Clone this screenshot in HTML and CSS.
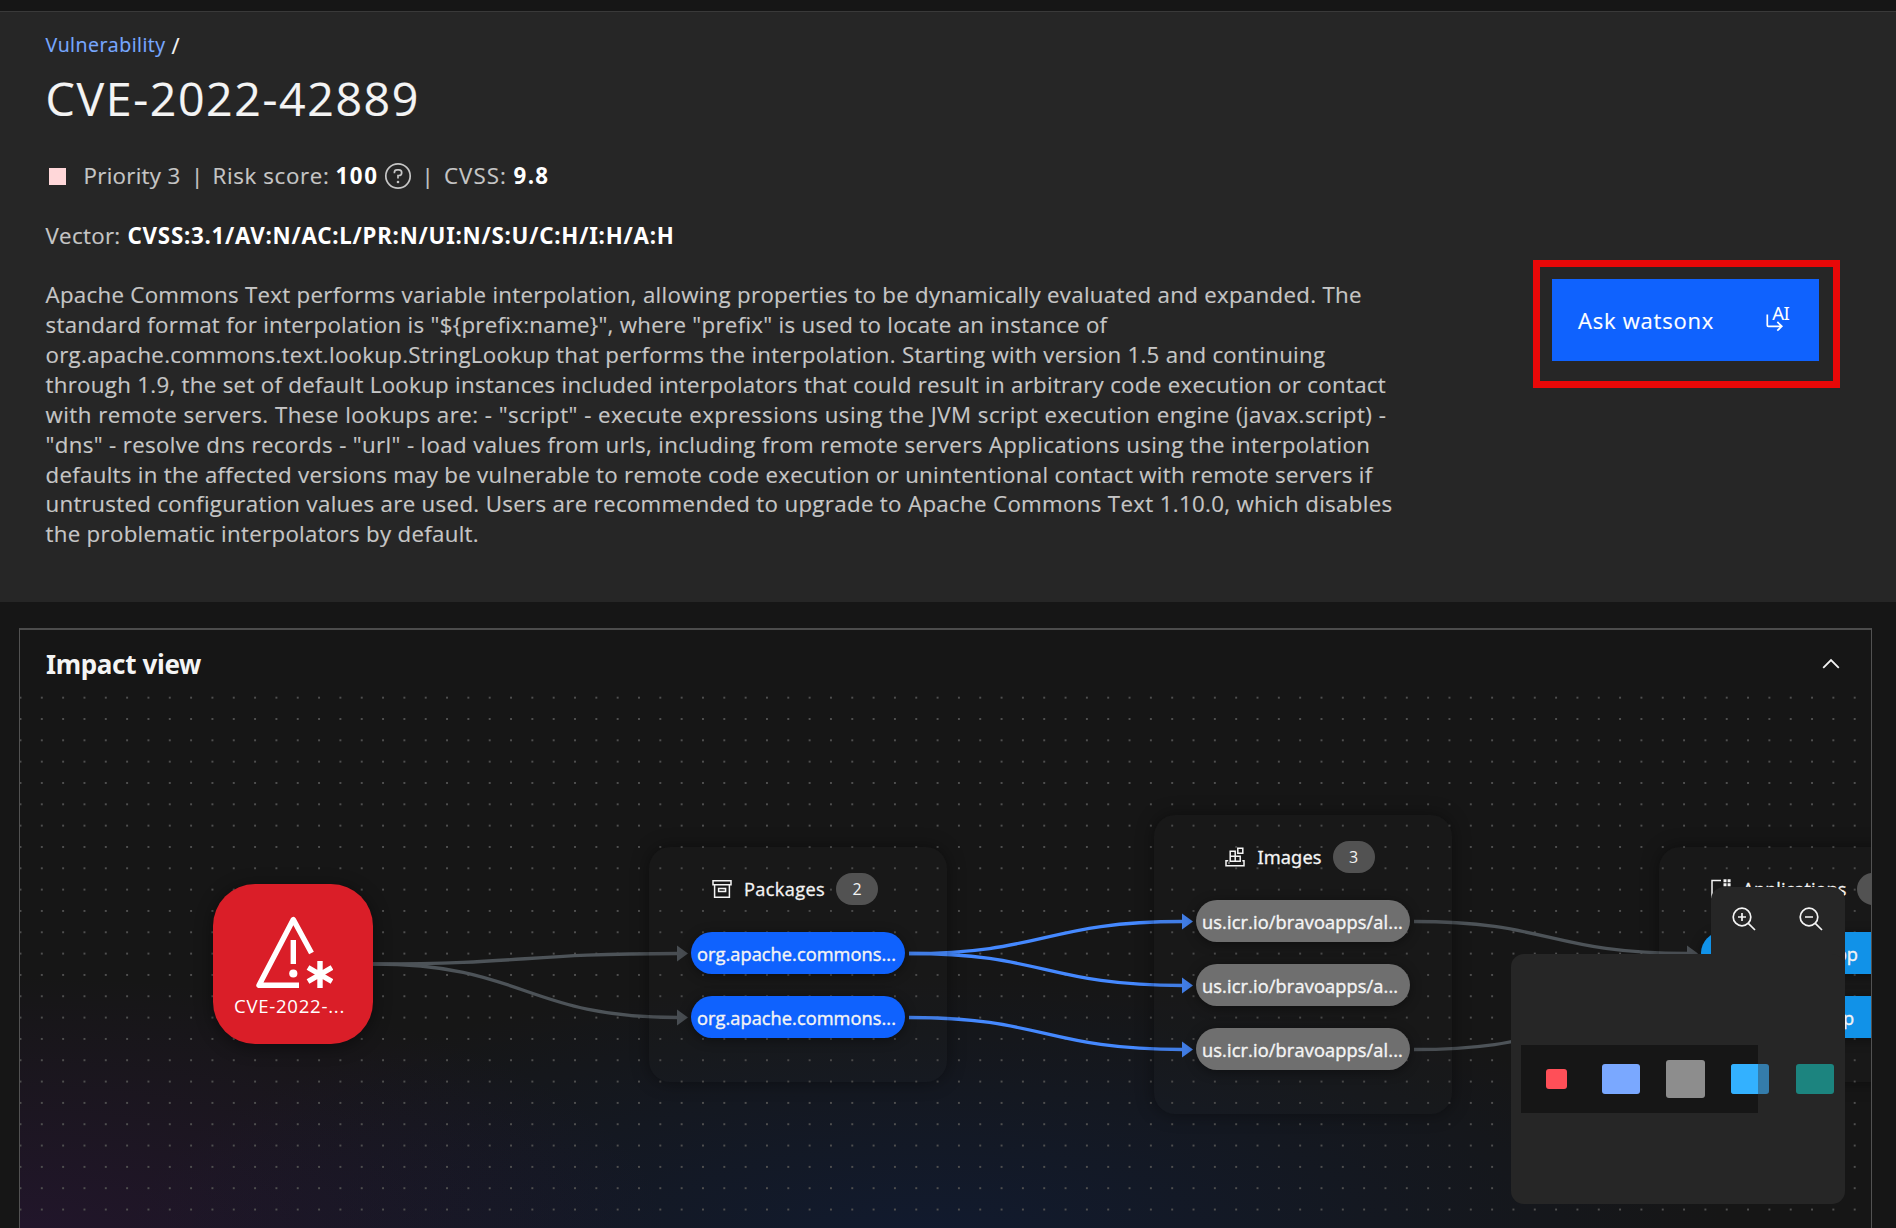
FILE: index.html
```html
<!DOCTYPE html>
<html lang="en">
<head>
<meta charset="utf-8">
<title>CVE-2022-42889</title>
<link rel="stylesheet" href="styles.css">
</head>
<body>
<header class="page-header">
  <div class="summary">
    <nav class="breadcrumb"><a class="crumb">Vulnerability</a><span class="slash">/</span></nav>
    <h1 class="title">CVE-2022-42889</h1>
    <div class="metrics">
      <span class="swatch"></span>
      <span class="priority">Priority 3</span>
      <span class="bar">|</span>
      <span class="risk">Risk score:</span>
      <strong class="risk-value">100</strong>
      <svg class="help" viewBox="0 0 28 28"><circle cx="14" cy="14" r="12.2"/><path d="M10.4 11.2v-.7a2.6 2.6 0 0 1 2.6-2.6h1.9a2.8 2.8 0 0 1 0 5.600H14v3"/><circle class="dot" cx="14" cy="20" r="1.3"/></svg>
      <span class="bar">|</span>
      <span class="cvss">CVSS:</span>
      <strong class="cvss-value">9.8</strong>
    </div>
    <div class="vector"><span class="vector-label">Vector:</span><strong class="vector-value">CVSS:3.1/AV:N/AC:L/PR:N/UI:N/S:U/C:H/I:H/A:H</strong></div>
    <p class="description">
      <span class="line">Apache Commons Text performs variable interpolation, allowing properties to be dynamically evaluated and expanded. The</span>
      <span class="line">standard format for interpolation is "${prefix:name}", where "prefix" is used to locate an instance of</span>
      <span class="line">org.apache.commons.text.lookup.StringLookup that performs the interpolation. Starting with version 1.5 and continuing</span>
      <span class="line">through 1.9, the set of default Lookup instances included interpolators that could result in arbitrary code execution or contact</span>
      <span class="line loose">with remote servers. These lookups are: - "script" - execute expressions using the JVM script execution engine (javax.script) -</span>
      <span class="line semi-loose">"dns" - resolve dns records - "url" - load values from urls, including from remote servers Applications using the interpolation</span>
      <span class="line">defaults in the affected versions may be vulnerable to remote code execution or unintentional contact with remote servers if</span>
      <span class="line untrusted">untrusted configuration values are used. Users are recommended to upgrade to Apache Commons Text 1.10.0, which disables</span>
      <span class="line">the problematic interpolators by default.</span>
    </p>
  </div>
  <div class="highlight">
    <button class="ask"><span class="ask-label">Ask watsonx</span>
      <svg class="ask-icon" viewBox="0 0 26 26"><path d="M2.300 9.500v10.800q0 1 1 1h13.300M12.300 16.900l4.500 4.400-4.500 4.400"/><text x="7.300" y="15.300">A</text><text x="18.500" y="15.300">I</text></svg>
    </button>
  </div>
</header>

<section class="panel">
  <div class="panel-head">
    <h2 class="panel-title">Impact view</h2>
    <svg class="chevron" viewBox="0 0 18 11"><path d="M1.200 9.800 9 2l7.800 7.800"/></svg>
  </div>
  <div class="canvas">
    <svg class="edges" width="1851" height="532" viewBox="20 696 1851 532">
      <g class="edge"><path d="M373 964C525 964 525 953.500 678 953.500"/><path d="M373 964C525 964 525 1017.500 678 1017.500"/><path d="M1414 921.500C1550 921.500 1550 953.500 1688 953.500"/><path d="M1414 1049.500C1550 1049.500 1550 1017.500 1688 1017.500"/></g>
      <g class="edge hot"><path d="M909 953.500C1045 953.500 1045 921.500 1183 921.500"/><path d="M909 953.500C1045 953.500 1045 985.500 1183 985.500"/><path d="M909 1017.500C1045 1017.500 1045 1049.500 1183 1049.500"/></g>
      <g class="tip"><path d="M677 945.500l11 8-11 8z"/><path d="M677 1009.500l11 8-11 8z"/><path d="M1687 945.500l11 8-11 8z"/></g>
      <g class="tip hot"><path d="M1182 913.500l11 8-11 8z"/><path d="M1182 977.500l11 8-11 8z"/><path d="M1182 1041.500l11 8-11 8z"/></g>
    </svg>

    <div class="root-node">
      <svg class="warning" viewBox="0 0 80 76"><path class="stroke" d="M58.500 39 40.300 5.500 6 71.300H46"/><path class="bang" d="M40.300 26v24"/><circle cx="40.300" cy="59.500" r="4.100"/><path class="star" d="M67 47v27M55 53.500l24 14M79 53.500l-24 14"/></svg>
      <span class="root-label">CVE-2022-...</span>
    </div>

    <div class="group packages">
      <div class="group-head">
        <svg class="gicon" viewBox="0 0 20 20"><path d="M1 1.700h18v4H1zM2.600 5.700h14.800v12.600H2.600zM6.600 9.500h7v3h-7z"/></svg>
        <span class="gname">Packages</span><span class="badge">2</span>
      </div>
      <div class="pill">org.apache.commons...</div>
      <div class="pill">org.apache.commons...</div>
    </div>

    <div class="group images">
      <div class="group-head">
        <svg class="gicon" viewBox="0 0 20 20"><path d="M5.200 4.300h5v5h-5zM5.200 9.300h5v5h-5zM10.200 9.300h5v5h-5zM12.800 1.300h5v5h-5zM3.300 13.800H1v5h18v-5h-1.700"/><circle class="dot" cx="4" cy="16" r=".7"/></svg>
        <span class="gname">Images</span><span class="badge">3</span>
      </div>
      <div class="pill">us.icr.io/bravoapps/al...</div>
      <div class="pill">us.icr.io/bravoapps/a...</div>
      <div class="pill">us.icr.io/bravoapps/al...</div>
    </div>

    <div class="group apps">
      <div class="group-head">
        <svg class="gicon" viewBox="0 0 20 20"><path d="M10 1.500H1v17h18v-8"/><path class="fill" d="M12.500.3h3v3h-3zM16.600.3h3v3h-3zM12.500 4.300h3v3h-3zM16.600 4.300h3v3h-3z"/></svg>
        <span class="gname">Applications</span><span class="badge">2</span>
      </div>
      <div class="pill">java-sample-app</div>
      <div class="pill">java-demos-app</div>
    </div>

    <div class="zoom-controls">
      <svg viewBox="0 0 24 24"><circle cx="10" cy="10" r="8.800"/><path d="M16.300 16.300l6.700 6.700M10 6v8M6 10h8"/></svg>
      <svg viewBox="0 0 24 24"><circle cx="10" cy="10" r="8.800"/><path d="M16.300 16.300l6.700 6.700M6 10h8"/></svg>
    </div>
    <div class="minimap">
      <svg width="334" height="250" viewBox="1511 954 334 250">
        <rect x="1521" y="1045" width="237" height="68" fill="#161616"/>
        <rect x="1546" y="1069" width="21" height="20" rx="3" fill="#ff4f58"/>
        <rect x="1602" y="1064" width="38" height="30" rx="3" fill="#7aa8ff"/>
        <rect x="1666" y="1060" width="39" height="38" rx="3" fill="#8d8d8d"/>
        <rect x="1731" y="1064" width="38" height="30" rx="3" fill="#347cab"/>
        <path d="M1758 1064h-24q-3 0-3 3v24q0 3 3 3h24z" fill="#33b1ff"/>
        <rect x="1796" y="1064" width="38" height="30" rx="3" fill="#1c847f"/>
      </svg>
    </div>
  </div>
</section>
</body>
</html>
```
FILE: styles.css
```css
* { box-sizing: border-box; }
body {
  margin: 0;
  padding-top: 11px;
  height: 1228px;
  overflow: hidden;
  background: #161616;
  color: #f4f4f4;
  font-family: "Open Sans", "Noto Sans", sans-serif;
}
h1, h2, p { margin: 0; font-weight: 400; }

.page-header {
  display: flex;
  justify-content: space-between;
  height: 591px;
  border-top: 1px solid #393939;
  background: #262626;
  padding: 21px 56px 0 45.5px;
  font-size: 22.3px;
  color: #c6c6c6;
}
.summary { width: 1380px; -webkit-text-stroke: .15px; }
.breadcrumb { display: flex; gap: 6px; height: 24px; line-height: 24px; font-size: 19.6px; }
.crumb { color: #78a9ff; letter-spacing: .45px; }
.slash { color: #f4f4f4; font-size: 22px; }
.title { margin-top: 12.5px; height: 56px; line-height: 56px; font-size: 46.5px; letter-spacing: 1.6px; color: #f4f4f4; }
.metrics { display: flex; align-items: center; height: 30px; margin-top: 35.5px; line-height: 30px; white-space: nowrap; }
strong { font-weight: 700; color: #fff; -webkit-text-stroke: 0; }
.swatch { flex: none; width: 17px; height: 17px; margin: 0 17.5px 0 3.5px; background: #ffd7d9; }
.priority { width: 98px; letter-spacing: .3px; }
.bar { width: 31px; text-align: center; }
.risk { width: 123px; letter-spacing: .66px; }
.risk-value { width: 48.5px; letter-spacing: 1.58px; }
.help { width: 28px; height: 28px; fill: none; stroke: #c6c6c6; stroke-width: 1.7; }
.dot { fill: currentColor; stroke: none; }
.cvss { width: 69.5px; margin-left: 1px; letter-spacing: 1.07px; }
.cvss-value { letter-spacing: 1.38px; }
.vector { display: flex; height: 30px; margin-top: 30px; line-height: 30px; white-space: nowrap; }
.vector-label { width: 82px; letter-spacing: .31px; }
.vector-value { font-family: "Noto Sans", sans-serif; letter-spacing: .762px; }
.description { margin-top: 29px; line-height: 29.92px; letter-spacing: .29px; }
.line { display: block; white-space: nowrap; width: max-content; }
.loose { letter-spacing: .47px; }
.semi-loose { letter-spacing: .35px; }
.untrusted { letter-spacing: .322px; }

.highlight { width: 307px; height: 128px; margin-top: 227px; padding: 12px 14px 0 12px; border: 7px solid #e80808; }
.ask {
  display: flex; align-items: center; justify-content: space-between;
  width: 267px; height: 82px; padding: 0 28px 0 26px;
  border: 0; background: #0f62fe; color: #fff; font: 22px "Open Sans", sans-serif;
}
.ask-label { letter-spacing: .77px; -webkit-text-stroke: .15px; }
.ask-icon { width: 26px; height: 26px; margin-top: -5px; overflow: visible; fill: none; stroke: #fff; stroke-width: 1.7; }
.ask-icon text { fill: #fff; stroke: none; font: 18.5px "Noto Sans", sans-serif; }

.panel { margin: 26px 24px 0 19px; height: 620px; border: 1px solid #525252; border-top: 2px solid #4c4c4c; }
.panel-head { display: flex; justify-content: space-between; align-items: center; height: 66px; padding: 2px 31px 0 26px; }
.panel-title { font: 700 26px/36px "Noto Sans", sans-serif; letter-spacing: -.35px; }
.chevron { width: 18px; height: 11px; margin-top: -2px; fill: none; stroke: #f4f4f4; stroke-width: 1.8; }
.canvas {
  position: relative; height: 540px; overflow: hidden;
  background:
    radial-gradient(circle, #4f4f4f 0.75px, transparent 1.2px) -10.2px -9px / 21.333px 21.333px,
    radial-gradient(ellipse 650px 260px at 0 100%, rgba(70, 20, 110, .24), transparent),
    radial-gradient(ellipse 800px 260px at 49% 100%, rgba(5, 38, 110, .28), transparent);
}
.edges { position: absolute; left: 0; top: 0; }
.edge { fill: none; stroke: #4d5358; stroke-width: 3.3; }
.edge.hot { stroke: #4589ff; }
.tip { fill: #4d5358; }
.tip.hot { fill: #4589ff; }

.root-node {
  position: absolute; left: 193px; top: 187.5px; width: 160px; height: 160px;
  display: flex; flex-direction: column; align-items: center;
  padding-top: 30px; border-radius: 42px; background: #da1e28;
  box-shadow: 0 3px 18px rgba(0, 0, 0, .45);
  font-size: 18.6px; line-height: 26px; color: #fff;
}
.root-label { margin: 3px 7px 0 0; letter-spacing: .73px; }
.warning { width: 80px; height: 76px; fill: #fff; flex: none; }
.stroke { fill: none; stroke: #fff; stroke-width: 5.4; stroke-linejoin: round; }
.bang, .star { stroke: #fff; stroke-width: 5.4; }

.group {
  position: absolute; display: flex; flex-direction: column; align-items: center; gap: 22px;
  width: 298px; padding-top: 26px; border-radius: 21px;
  background: rgba(38, 38, 38, .12); box-shadow: 0 0 18px rgba(0, 0, 0, .4);
}
.packages { left: 629px; top: 150.6px; height: 235px; }
.images { left: 1134px; top: 118.6px; height: 299px; }
.apps { left: 1639px; top: 150.6px; height: 235px; }
.group-head { display: flex; align-items: center; height: 32px; margin: 0 6px 5px 0; }
.gicon { width: 20px; height: 20px; margin-right: 12px; fill: none; stroke: #f4f4f4; stroke-width: 1.5; }
.fill { fill: #f4f4f4; stroke: none; }
.gname { padding-top: 1px; font-size: 18.2px; letter-spacing: .35px; -webkit-text-stroke: .3px; }
.images .gname { font-family: "Noto Sans", sans-serif; letter-spacing: .1px; }
.apps .gname { letter-spacing: .03px; }
.badge { width: 42px; height: 32px; margin-left: 11px; border-radius: 16px; background: #525252; text-align: center; font-size: 16px; line-height: 32px; }
.pill {
  width: 214px; height: 42px; padding-left: 6px; border-radius: 21px; background: #0f62fe;
  box-shadow: 0 2px 12px rgba(0, 0, 0, .4);
  font-size: 18.2px; line-height: 44px; letter-spacing: .064px; white-space: nowrap; -webkit-text-stroke: .4px;
}
.images .pill { background: #6f6f6f; letter-spacing: .13px; }
.apps .pill { padding-left: 17px; background: #1192e8; letter-spacing: .03px; }

.zoom-controls {
  position: absolute; left: 1691px; top: 191px; width: 134px; height: 80px;
  display: flex; gap: 43px; padding: 20px 0 0 21px; border-radius: 13px 13px 0 0; background: #262626;
}
.zoom-controls svg { width: 24px; height: 24px; fill: none; stroke: #f4f4f4; stroke-width: 1.7; }
.minimap { position: absolute; left: 1491px; top: 258px; width: 334px; height: 250px; border-radius: 13px; background: #262626; }
```
